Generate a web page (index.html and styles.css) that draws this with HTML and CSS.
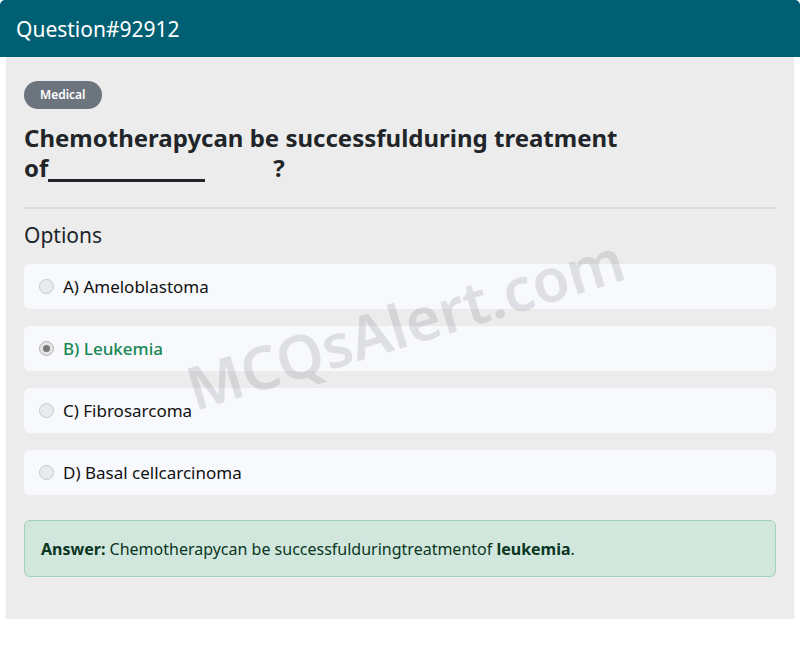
FILE: index.html
```html
<!DOCTYPE html>
<html lang="en">
<head>
<meta charset="utf-8">
<title>Question#92912</title>
<link rel="stylesheet" href="styles.css">
</head>
<body>
<div class="card">
  <div class="card-header">Question#92912</div>
  <div class="card-body">
    <span class="badge">Medical</span>
    <h2 class="question">Chemotherapycan be successfulduring treatment <span class="tail">of<span class="blank"></span><span class="gap"></span>?</span></h2>
    <hr class="divider">
    <div class="options-title">Options</div>
    <div class="options">
      <div class="option"><span class="radio"></span><span class="label">A) Ameloblastoma</span></div>
      <div class="option correct"><span class="radio checked"></span><span class="label">B) Leukemia</span></div>
      <div class="option"><span class="radio"></span><span class="label">C) Fibrosarcoma</span></div>
      <div class="option"><span class="radio"></span><span class="label">D) Basal cellcarcinoma</span></div>
    </div>
    <div class="answer"><b>Answer:</b> Chemotherapycan be successfulduringtreatmentof <b>leukemia</b>.</div>
  </div>
  <div class="watermark">MCQsAlert.com</div>
</div>
</body>
</html>
```
FILE: styles.css
```css
html, body {
  margin: 0;
  padding: 0;
  background: #ffffff;
}
body {
  font-family: "Noto Sans", "DejaVu Sans", sans-serif;
  color: #212529;
}
.card {
  position: relative;
  width: 800px;
}
.card-header {
  height: 57px;
  background: #005f73;
  color: #ffffff;
  font-size: 21px;
  border-radius: 5px 5px 0 0;
  padding: 0 16px;
  display: flex;
  align-items: center;
  box-sizing: border-box;
}
.card-body {
  margin: 0 6px;
  background: #ececec;
  padding: 24px 18px 42px;
  box-shadow: 0 2px 3px rgba(0, 0, 0, 0.06);
}
.badge {
  display: inline-block;
  height: 28px;
  line-height: 28px;
  padding: 0 16px;
  border-radius: 14px;
  background: #6c757d;
  color: #ffffff;
  font-size: 12px;
  font-weight: 600;
  vertical-align: top;
}
.question {
  margin: 14px 0 0;
  font-size: 24px;
  line-height: 30px;
  font-weight: 700;
  color: #212529;
}
.tail {
  white-space: nowrap;
}
.blank {
  display: inline-block;
  width: 157px;
  height: 4px;
  border-bottom: 3px solid #212529;
  vertical-align: -5px;
}
.gap {
  display: inline-block;
  width: 68px;
}
.divider {
  margin: 24px 0 0;
  border: 0;
  border-top: 2px solid #dcdcdc;
}
.options-title {
  margin-top: 13px;
  font-size: 21px;
  line-height: 26px;
}
.options {
  margin-top: 16px;
  display: flex;
  flex-direction: column;
  gap: 17px;
}
.option {
  height: 45px;
  background: #f8f9fc;
  border-radius: 6px;
  display: flex;
  align-items: center;
  padding: 0 15px;
  gap: 9px;
  font-size: 17px;
  color: #111111;
}
.radio {
  width: 15px;
  height: 15px;
  box-sizing: border-box;
  border-radius: 50%;
  border: 1px solid #c6c8cc;
  background: #e9ebef;
  display: flex;
  align-items: center;
  justify-content: center;
  flex: none;
}
.radio.checked {
  border-color: #b4b4b4;
  background: #e4e4e4;
}
.radio.checked::after {
  content: "";
  width: 7px;
  height: 7px;
  border-radius: 50%;
  background: #777777;
}
.option.correct .label {
  color: #198754;
  font-weight: 500;
}
.answer {
  margin-top: 25px;
  background: #d1e7dd;
  border: 1px solid #a3cfbb;
  border-radius: 6px;
  padding: 0 16px;
  height: 57px;
  box-sizing: border-box;
  display: flex;
  align-items: center;
  font-size: 16px;
  color: #0a3622;
  white-space: pre;
}
.watermark {
  position: absolute;
  left: 165px;
  top: 282px;
  width: 480px;
  text-align: center;
  font-size: 60px;
  font-weight: 600;
  color: rgba(120, 120, 135, 0.2);
  transform: rotate(-17deg);
  pointer-events: none;
  white-space: nowrap;
}
```
